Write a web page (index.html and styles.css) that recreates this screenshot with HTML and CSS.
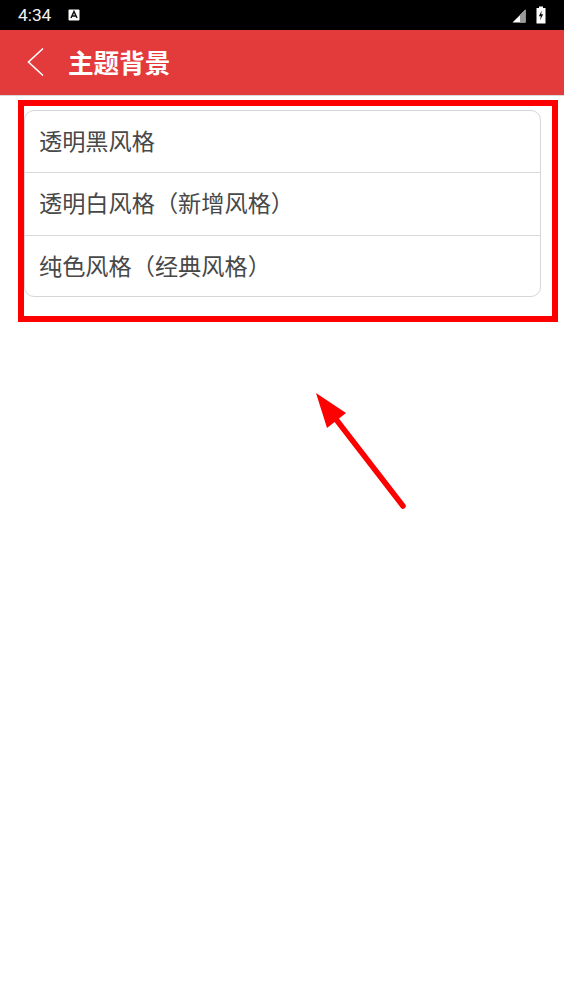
FILE: index.html
```html
<!DOCTYPE html>
<html lang="zh-CN">
<head>
    <meta charset="UTF-8">
    <meta name="viewport" content="width=device-width, initial-scale=1.0">
    <title>主题背景</title>
    <link rel="stylesheet" href="styles.css">
</head>
<body>
    <div id="app">
        <!-- Status bar -->
        <div class="status-bar">
            <span class="status-time">4:34</span>
            <svg class="status-a" width="12" height="12" viewBox="0 0 12 12">
                <rect x="0.5" y="0.5" width="11" height="11" rx="1" fill="#fff"/>
                <path d="M3 9 L6 2.5 L9 9 M4.2 7 H7.8" fill="none" stroke="#111" stroke-width="1.5"/>
            </svg>
            <span class="status-space"></span>
            <svg class="status-signal" width="14" height="14" viewBox="0 0 14 14">
                <path d="M0.5 13.5 L13.5 0.5 V13.5 Z" fill="#fff"/>
                <path d="M8 6 L13.5 0.5 V13.5 H8 Z" fill="#9a9a9a"/>
            </svg>
            <svg class="status-battery" width="10" height="18" viewBox="0 0 10 18">
                <path d="M3 0.5 H7 V2 H9.5 V17.5 H0.5 V2 H3 Z" fill="#fff"/>
                <path d="M5.8 4.5 L2.8 10.3 H4.8 L4 14.5 L7.2 8.3 H5.2 Z" fill="#111"/>
            </svg>
        </div>

        <!-- Title bar -->
        <div class="title-bar">
            <svg class="back-icon" width="18" height="30" viewBox="0 0 18 30">
                <path d="M17 1.5 L2.5 15 L17 28.5" fill="none" stroke="#fff" stroke-width="1.6"/>
            </svg>
            <h1>主题背景</h1>
        </div>

        <!-- Theme list -->
        <ul class="theme-list">
            <li>透明黑风格</li>
            <li>透明白风格（新增风格）</li>
            <li>纯色风格（经典风格）</li>
        </ul>
    </div>

    <!-- Annotations on top of the screenshot -->
    <div class="mark-box"></div>
    <svg class="mark-arrow" width="100" height="124" viewBox="0 0 100 124">
        <path d="M88 114 L20 26" fill="none" stroke="#fe0000" stroke-width="5.5" stroke-linecap="round"/>
        <path d="M1 1 L31 21 L12 36 Z" fill="#fe0000"/>
    </svg>
</body>
</html>
```

FILE: styles.css
```css
html, body {
    margin: 0;
    padding: 0;
    height: 100%;
}
body {
    font-family: "Roboto", "Noto Sans CJK SC", sans-serif;
    background-color: white;
    color: #484848;
    position: relative;
    overflow: hidden;
}
.status-bar {
    display: flex;
    align-items: center;
    height: 30px;
    padding: 0 18px 0 18px;
    background-color: #000;
    color: #f2f2f2;
}
.status-time {
    font-size: 17.3px;
}
.status-a {
    margin-left: 17px;
}
.status-space {
    flex: 1;
}
.status-signal {
    margin-right: 10px;
    margin-top: 2px;
}
.status-battery {
    margin-top: -1px;
}
.title-bar {
    display: flex;
    align-items: center;
    height: 66px;
    padding: 0 0 2px 26px;
    background-color: #e33b3b;
    border-bottom: 1px solid #d9d9d9;
    box-sizing: border-box;
    color: white;
}
.title-bar h1 {
    margin: 0 0 0 24px;
    font-size: 25.6px;
    font-weight: 700;
}
.back-icon {
    display: block;
}
.theme-list {
    list-style: none;
    margin: 14px 23px 0 24px;
    padding: 0;
    background-color: white;
    border: 1px solid #d6d6d6;
    border-radius: 10px;
}
.theme-list li {
    height: 61.33px;
    line-height: 62px;
    padding-left: 14px;
    font-size: 23.2px;
    border-bottom: 1px solid #d9d9d9;
}
.theme-list li:last-child {
    height: 60px;
    border-bottom: none;
}
.mark-box {
    position: absolute;
    left: 18px;
    top: 100px;
    width: 528px;
    height: 210px;
    border: 6px solid #fe0000;
}
.mark-arrow {
    position: absolute;
    left: 315px;
    top: 392px;
}
```
